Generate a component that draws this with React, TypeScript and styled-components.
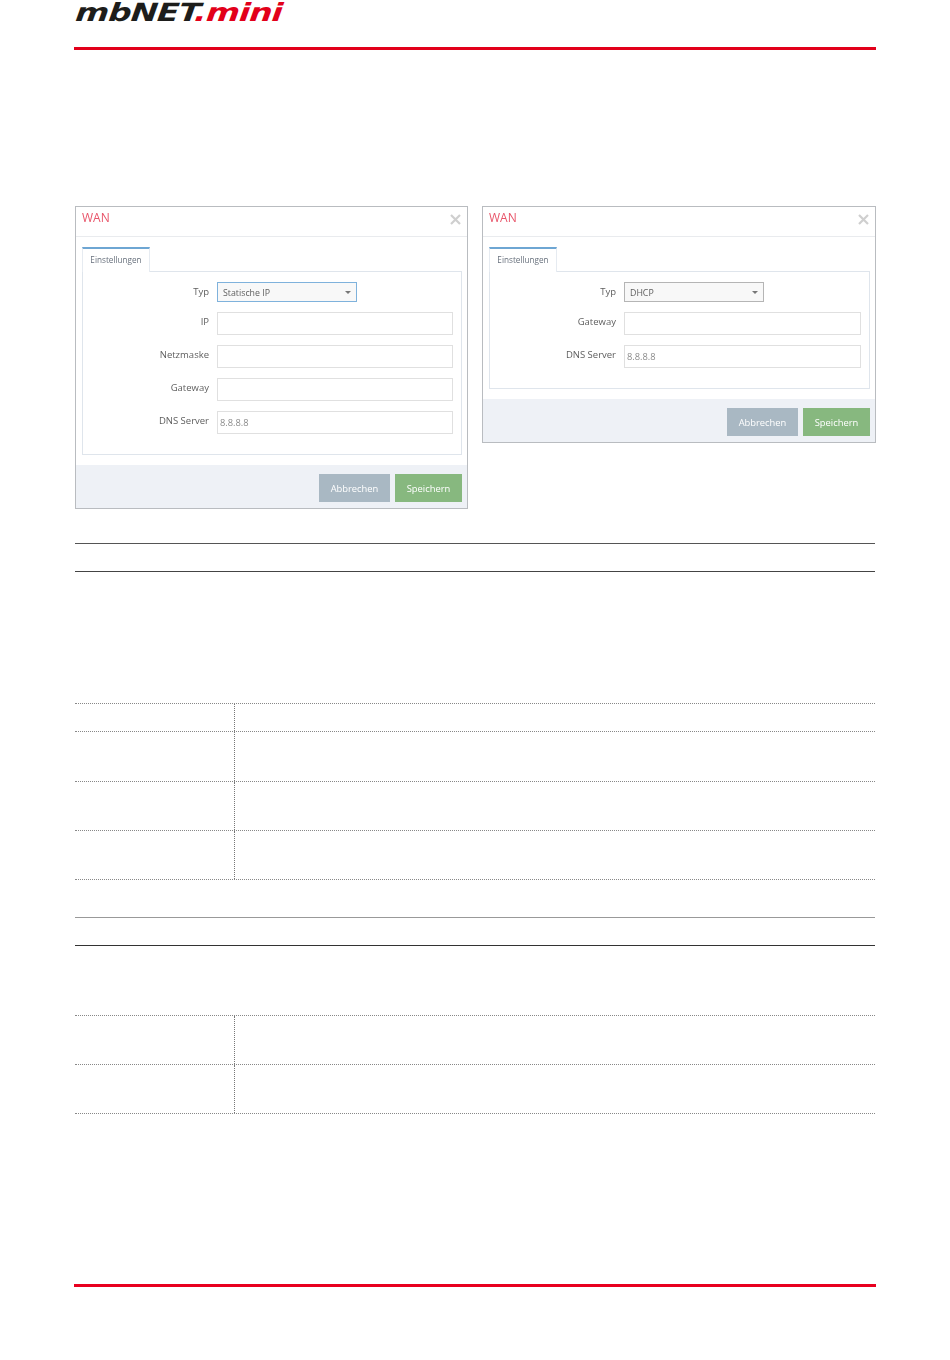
import styled, { createGlobalStyle } from "styled-components";

const GlobalStyle = createGlobalStyle`
	html, body {
		margin: 0;
		padding: 0;
		background: #fff;
		font-family: "Open Sans", "Liberation Sans", sans-serif;
	}
`;

const Page = styled.div`
	box-sizing: border-box;
	width: 950px;
	height: 1360px;
	padding: 0 74px 0 75px;
	display: flex;
	flex-direction: column;
`;

const Header = styled.header`
	height: 50px;
	box-sizing: border-box;
	border-bottom: 3px solid #e2001a;
	margin-left: -1px;
	padding: 0 0 0 3px;
`;

const Logo = styled.div`
	font-family: "DejaVu Sans", sans-serif;
	font-weight: 700;
	font-style: italic;
	font-size: 25px;
	line-height: 26px;
	letter-spacing: -0.5px;
	color: #1d1d1b;
	transform: skewX(-6deg) scaleX(1.29);
	transform-origin: left top;
	width: max-content;

	span {
		color: #e2001a;
	}
`;

const Screens = styled.div`
	display: flex;
	align-items: flex-start;
	gap: 14px;
	margin-top: 156px;
`;

const Dialog = styled.section<{ $width: number }>`
	box-sizing: border-box;
	width: ${(p) => p.$width}px;
	border: 1px solid #b9bcc0;
	background: #fff;
	filter: blur(0.4px);
`;

const DialogHead = styled.div`
	display: flex;
	justify-content: space-between;
	align-items: flex-start;
	height: 30px;
	box-sizing: border-box;
	padding: 3px 6px 0 6px;
	border-bottom: 1px solid #e9ebee;
	color: #e8556a;
	font-size: 12px;
	line-height: 16px;
`;

const CloseIcon = styled.svg`
	width: 11px;
	height: 11px;
	margin-top: 4px;
	stroke: #cfcfcf;
	stroke-width: 2.2;
`;

const DialogBody = styled.div`
	padding: 10px 5px 10px 6px;
`;

const Tab = styled.div`
	box-sizing: border-box;
	width: 68px;
	height: 25px;
	border: 1px solid #e6ebf1;
	border-top: 2px solid #6ea6d3;
	border-bottom: 0;
	background: #fff;
	padding-top: 4px;
	text-align: center;
	font-size: 8.2px;
	line-height: 14px;
	color: #68717d;
	position: relative;
	margin-bottom: -1px;
`;

const TabPanel = styled.div`
	box-sizing: border-box;
	border: 1px solid #dfe5ec;
	padding: 10px 8px 20px 0;
	display: flex;
	flex-direction: column;
	gap: 10px;
`;

const FormRow = styled.div`
	display: grid;
	grid-template-columns: 126px 1fr;
	column-gap: 8px;
	align-items: flex-start;
`;

const Label = styled.label`
	text-align: right;
	font-size: 9.5px;
	line-height: 20px;
	color: #5e5e5e;
`;

const Input = styled.div`
	box-sizing: border-box;
	height: 23px;
	border: 1px solid #e0e0e0;
	padding: 0 2px;
	font-size: 9.3px;
	line-height: 21px;
	color: #8b8b8b;
`;

const Select = styled.div<{ $focused?: boolean }>`
	box-sizing: border-box;
	width: 140px;
	height: 20px;
	border: 1px solid ${(p) => (p.$focused ? "#7fb2dc" : "#b5b5b5")};
	background: #f8f8f8;
	padding: 1px 5px 0 5px;
	display: flex;
	justify-content: space-between;
	align-items: center;
	font-size: 8.8px;
	color: #5e5e5e;

	&::after {
		content: "";
		border: 3px solid transparent;
		border-top: 3px solid #777;
		border-bottom: 0;
	}
`;

const DialogFoot = styled.div`
	display: flex;
	justify-content: flex-end;
	gap: 5px;
	height: 43px;
	box-sizing: border-box;
	padding: 9px 5px 0;
	background: #eef1f6;
`;

const Button = styled.div<{ $color: string; $width: number }>`
	box-sizing: border-box;
	width: ${(p) => p.$width}px;
	height: 28px;
	background: ${(p) => p.$color};
	color: #fff;
	text-align: center;
	font-size: 9.4px;
	line-height: 29px;
`;

const Table = styled.div<{ $top: number }>`
	margin-top: ${(p) => p.$top}px;
	margin-right: 1px;
`;

const Row = styled.div<{ $height: number; $line: string; $solid?: boolean }>`
	box-sizing: border-box;
	display: grid;
	grid-template-columns: 159px 1fr;
	height: ${(p) => p.$height}px;
	border-bottom: 1px ${(p) => (p.$solid ? "solid" : "dotted")} ${(p) => p.$line};
`;

const Cell = styled.div<{ $divider?: boolean }>`
	border-left: ${(p) => (p.$divider ? "1px dotted #777" : "0")};
`;

const FooterRule = styled.div`
	margin-top: auto;
	margin-bottom: 73px;
	margin-left: -1px;
	height: 3px;
	background: #e8001f;
`;

function WanDialog({ dhcp, width }: { dhcp?: boolean; width: number }) {
	return (
		<Dialog $width={width}>
			<DialogHead>
				<span>WAN</span>
				<CloseIcon viewBox="0 0 11 11">
					<path d="M1 1L10 10M10 1L1 10" />
				</CloseIcon>
			</DialogHead>
			<DialogBody>
				<Tab>Einstellungen</Tab>
				<TabPanel>
					<FormRow>
						<Label>Typ</Label>
						<Select $focused={!dhcp}>{dhcp ? "DHCP" : "Statische IP"}</Select>
					</FormRow>
					{!dhcp && (
						<FormRow>
							<Label>IP</Label>
							<Input />
						</FormRow>
					)}
					{!dhcp && (
						<FormRow>
							<Label>Netzmaske</Label>
							<Input />
						</FormRow>
					)}
					<FormRow>
						<Label>Gateway</Label>
						<Input />
					</FormRow>
					<FormRow>
						<Label>DNS Server</Label>
						<Input>8.8.8.8</Input>
					</FormRow>
				</TabPanel>
			</DialogBody>
			<DialogFoot>
				<Button $color="#a9b8c3" $width={71}>Abbrechen</Button>
				<Button $color="#87b87f" $width={67}>Speichern</Button>
			</DialogFoot>
		</Dialog>
	);
}

export default function App() {
	return (
		<>
			<GlobalStyle />
			<Page>
				<Header>
					<Logo>mbNET<span>.mini</span></Logo>
				</Header>
				<Screens>
					<WanDialog width={393} />
					<WanDialog width={394} dhcp />
				</Screens>

				<Table $top={34}>
					<Row $height={1} $line="#555" $solid />
					<Row $height={28} $line="#444" $solid />
				</Table>

				<Table $top={131}>
					<Row $height={1} $line="#888" />
					<Row $height={28} $line="#888"><Cell /><Cell $divider /></Row>
					<Row $height={50} $line="#888"><Cell /><Cell $divider /></Row>
					<Row $height={49} $line="#888"><Cell /><Cell $divider /></Row>
					<Row $height={49} $line="#888"><Cell /><Cell $divider /></Row>
				</Table>

				<Table $top={37}>
					<Row $height={1} $line="#999" $solid />
					<Row $height={28} $line="#333" $solid />
				</Table>

				<Table $top={69}>
					<Row $height={1} $line="#888" />
					<Row $height={49} $line="#888"><Cell /><Cell $divider /></Row>
					<Row $height={49} $line="#888"><Cell /><Cell $divider /></Row>
				</Table>

				<FooterRule />
			</Page>
		</>
	);
}
